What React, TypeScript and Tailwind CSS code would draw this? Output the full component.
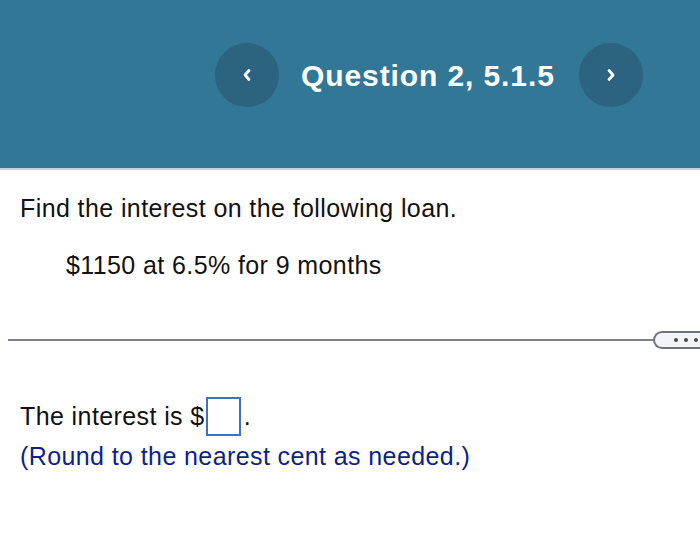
export default function App() {
  return (
    <div className="w-[700px] h-[540px] bg-white overflow-hidden" style={{ fontFamily: "'Liberation Sans', Arial, sans-serif" }}>
      {/* Header */}
      <div className="h-[170px] bg-[#327795] border-b-2 border-[#c5ceda] flex items-center">
        <div className="flex items-center ml-[215px] mt-[-18px]">
          <button className="w-16 h-16 rounded-full bg-[#2b6380] flex items-center justify-center">
            <svg width="12" height="14" viewBox="0 0 12 14" fill="none" stroke="white" strokeWidth="2.8" strokeLinecap="round" strokeLinejoin="round">
              <path d="M8 2.5 L4 7 L8 11.5" />
            </svg>
          </button>
          <h1 className="ml-[22px] w-[278px] text-white font-bold text-[30px] tracking-[0.9px]">Question 2, 5.1.5</h1>
          <button className="w-16 h-16 rounded-full bg-[#2b6380] flex items-center justify-center">
            <svg width="12" height="14" viewBox="0 0 12 14" fill="none" stroke="white" strokeWidth="2.8" strokeLinecap="round" strokeLinejoin="round">
              <path d="M4 2.5 L8 7 L4 11.5" />
            </svg>
          </button>
        </div>
      </div>

      {/* Question */}
      <div className="pt-[23px] pl-5 text-[25px] tracking-[0.4px] text-[#111]">
        <p className="leading-[30px]">Find the interest on the following loan.</p>
        <p className="leading-[30px] mt-[27px] pl-[46px]">$1150 at 6.5% for 9 months</p>
      </div>

      {/* Divider */}
      <div className="mt-[51px] flex items-center">
        <div className="ml-2 flex-1 h-[2px] bg-[#7b808c]" />
        <div className="w-[47px] h-[18px] border-2 border-[#6e7480] rounded-l-[9px] border-r-0 bg-[#f3f4f6] flex items-center gap-[6px] pl-[19px]">
          <span className="w-[4px] h-[4px] rounded-full bg-[#454a55]" />
          <span className="w-[4px] h-[4px] rounded-full bg-[#454a55]" />
          <span className="w-[4px] h-[4px] rounded-full bg-[#454a55]" />
        </div>
      </div>

      {/* Answer */}
      <div className="mt-[48px] pl-5 text-[25px] tracking-[0.4px]">
        <div className="flex items-center text-[#111]">
          <span>The interest is $</span>
          <span className="ml-[1px] w-[35px] h-[39px] border-2 border-[#3f6fc8]" />
          <span className="ml-[3px]">.</span>
        </div>
        <p className="text-[#0d1f8c] mt-[2px]">(Round to the nearest cent as needed.)</p>
      </div>
    </div>
  );
}
